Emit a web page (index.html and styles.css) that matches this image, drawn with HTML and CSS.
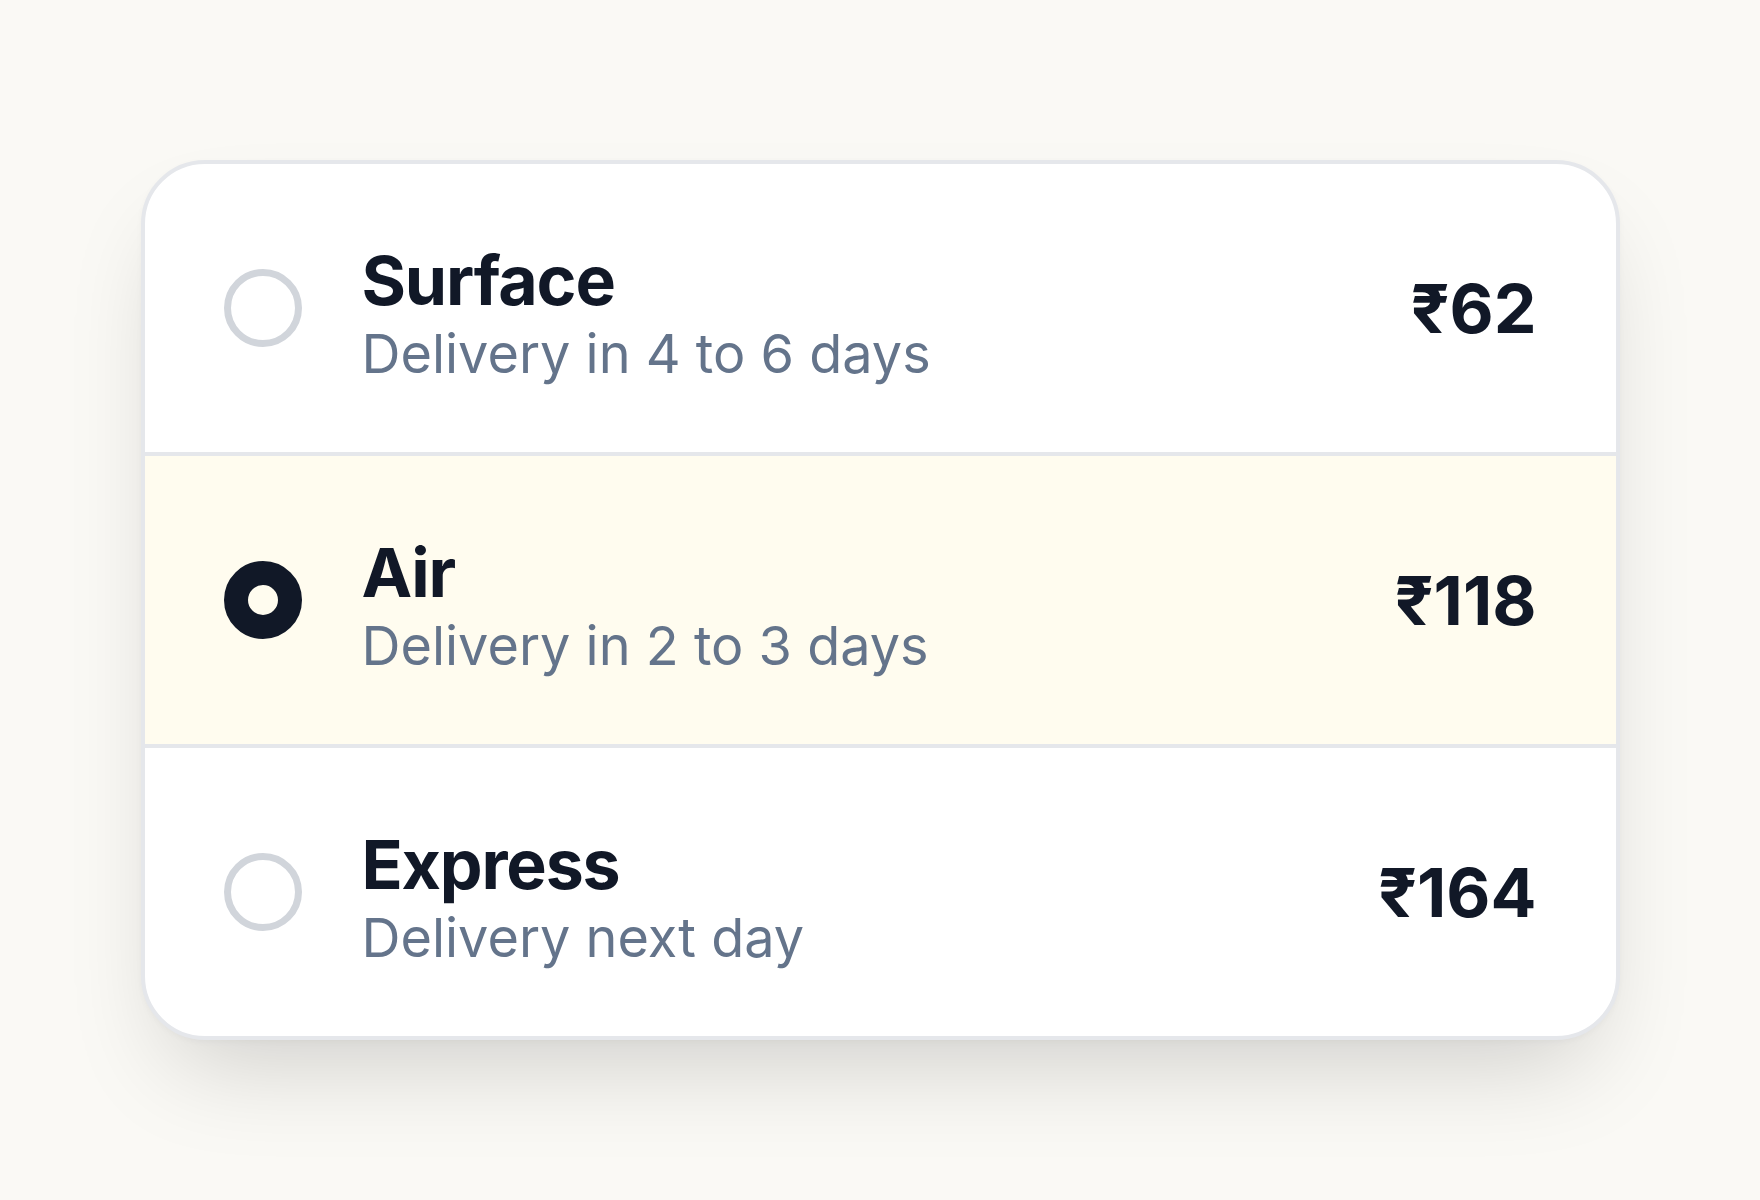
FILE: index.html
```html
<!DOCTYPE html>
<html lang="en">
<head>
<meta charset="utf-8">
<title>Shipping options</title>
<link rel="stylesheet" href="styles.css">
</head>
<body>
<main class="stage">
  <div class="card" role="radiogroup">
    <div class="option">
      <span class="radio"></span>
      <div class="info">
        <div class="name">Surface</div>
        <div class="desc">Delivery in 4 to 6 days</div>
      </div>
      <div class="price">₹62</div>
    </div>
    <div class="option selected">
      <span class="radio"></span>
      <div class="info">
        <div class="name">Air</div>
        <div class="desc">Delivery in 2 to 3 days</div>
      </div>
      <div class="price">₹118</div>
    </div>
    <div class="option">
      <span class="radio"></span>
      <div class="info">
        <div class="name">Express</div>
        <div class="desc">Delivery next day</div>
      </div>
      <div class="price">₹164</div>
    </div>
  </div>
</main>
</body>
</html>
```

FILE: styles.css
```css
* { box-sizing: border-box; }
html, body { margin: 0; padding: 0; }
body {
  background: #faf9f5;
  font-family: Inter, "Noto Sans", "DejaVu Sans", sans-serif;
}
.stage {
  height: 1200px;
  display: flex;
  align-items: center;
  justify-content: center;
}
.card {
  width: 1479px;
  background: #ffffff;
  border: 4px solid #e5e7eb;
  border-radius: 64px;
  overflow: hidden;
  box-shadow: 0 50px 100px -30px rgba(0, 0, 0, 0.18), 0 2px 6px rgba(0, 0, 0, 0.03);
}
.option {
  height: 288px;
  display: flex;
  align-items: center;
  padding: 0 79px;
}
.option + .option { border-top: 4px solid #e5e7eb; height: 292px; }
.option.selected { background: #fffcef; }
.radio {
  flex: none;
  width: 78px;
  height: 78px;
  border-radius: 50%;
  border: 7px solid #d1d5db;
}
.selected .radio { border: 24.5px solid #111827; }
.info {
  flex: 1;
  margin-left: 60px;
}
.name {
  font-size: 68px;
  font-weight: 700;
  line-height: 92px;
  letter-spacing: -1.2px;
  color: #111827;
}
.desc {
  font-size: 54px;
  font-weight: 400;
  line-height: 56px;
  color: #64748b;
}
.price {
  font-size: 68px;
  font-weight: 700;
  color: #111827;
  line-height: 82px;
}
```
